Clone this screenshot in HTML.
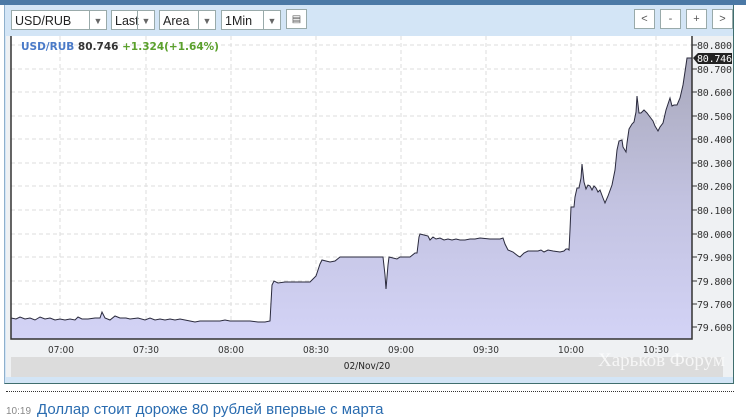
<!DOCTYPE html>
<html><head><meta charset="utf-8"><style>
body{margin:0;width:746px;height:407px;overflow:hidden;background:#fff;font-family:"Liberation Sans","DejaVu Sans",sans-serif;position:relative}
.panel{position:absolute;left:4px;top:0;width:728px;height:383px;background:#d3e5f6;border-right:1px solid #3f6e6e;border-bottom:1px solid #3f6e6e;border-left:1px solid #8fb0cc}
.top{position:absolute;left:0;top:0;width:746px;height:5px;background:#4b79a6}
.sel{position:absolute;top:10px;height:20px;background:#fff;border:1px solid #9aa;font-size:12.5px;line-height:20px;color:#222;box-sizing:border-box}
.sel span{position:absolute;right:0;top:0;width:16px;height:18px;border-left:1px solid #9aa;font-size:9px;text-align:center;color:#666}
.btn{position:absolute;top:9px;width:21px;height:20px;background:#fff;border:1px solid #9aa;font-size:11px;text-align:center;line-height:19px;color:#555;box-sizing:border-box}
.inner{position:absolute;left:6px;top:36px;width:727px;height:341px;background:#eff1f3}
.date{position:absolute;left:11px;top:357px;width:712px;height:20px;background:#dcdcdc;font-size:10px;text-align:center;line-height:20px;color:#222;font-family:"DejaVu Sans Condensed","DejaVu Sans",sans-serif}
.wm{position:absolute;left:598px;top:350px;font-family:"Liberation Serif",serif;font-size:19px;color:rgba(255,255,255,.75)}
.dot{position:absolute;left:6px;top:391px;width:728px;border-top:1px dotted #333}
.news{position:absolute;left:6px;top:401px;font-size:15px;color:#2a6cb0;white-space:nowrap}
.news b{font-weight:normal;color:#888;font-size:10px;margin-right:6px}
</style></head><body>
<div class="panel"></div>
<div class="top"></div>
<div class="sel" style="left:11px;width:96px;padding-left:3px">USD/RUB<span>▼</span></div>
<div class="sel" style="left:111px;width:44px;padding-left:3px">Last<span>▼</span></div>
<div class="sel" style="left:159px;width:57px;padding-left:3px">Area<span>▼</span></div>
<div class="sel" style="left:221px;width:60px;padding-left:3px">1Min<span>▼</span></div>
<div class="btn" style="left:286px;font-size:10px">▤</div>
<div class="btn" style="left:634px">&lt;</div>
<div class="btn" style="left:660px">-</div>
<div class="btn" style="left:686px">+</div>
<div class="btn" style="left:712px">&gt;</div>
<div class="inner"></div>
<svg style="position:absolute;left:0;top:0" width="746" height="407">
<defs><linearGradient id="g" x1="0" y1="0" x2="0" y2="1"><stop offset="0" stop-color="#a8a8bb"/><stop offset="0.5" stop-color="#c2c2e0"/><stop offset="1" stop-color="#d3d3f6"/></linearGradient></defs>
<rect x="11" y="36" width="681" height="303" fill="#fff"/>
<g stroke="#ddd" stroke-dasharray="4,3" stroke-width="1">
<line x1="11" x2="692" y1="45" y2="45"/><line x1="11" x2="692" y1="69" y2="69"/><line x1="11" x2="692" y1="92" y2="92"/><line x1="11" x2="692" y1="116" y2="116"/><line x1="11" x2="692" y1="139" y2="139"/><line x1="11" x2="692" y1="163" y2="163"/><line x1="11" x2="692" y1="186" y2="186"/><line x1="11" x2="692" y1="210" y2="210"/><line x1="11" x2="692" y1="234" y2="234"/><line x1="11" x2="692" y1="257" y2="257"/><line x1="11" x2="692" y1="281" y2="281"/><line x1="11" x2="692" y1="304" y2="304"/><line x1="11" x2="692" y1="327" y2="327"/>
<line y1="36" y2="339" x1="60" x2="60"/><line y1="36" y2="339" x1="146" x2="146"/><line y1="36" y2="339" x1="231" x2="231"/><line y1="36" y2="339" x1="316" x2="316"/><line y1="36" y2="339" x1="401" x2="401"/><line y1="36" y2="339" x1="486" x2="486"/><line y1="36" y2="339" x1="571" x2="571"/><line y1="36" y2="339" x1="656" x2="656"/>
</g>
<path d="M11,318 L16,319 20,317 25,319 30,318 35,320 40,317 45,319 50,318 55,320 60,319 65,320 70,319 75,320 78,317 82,319 88,319 95,318 100,318 102,312 105,318 110,320 115,316 120,318 126,318 130,319 138,318 145,320 150,318 155,320 160,319 165,320 170,319 175,320 180,319 190,321 195,322 200,321 210,321 220,321 225,320 230,321 240,321 250,321 258,322 265,322 270,321 272,285 274,281 278,283 285,282 290,282 298,282 305,282 310,282 313,279 316,276 320,264 322,260 326,261 330,262 335,261 340,257 350,257 365,257 375,257 383,257 385,275 386,289 388,265 389,257 393,258 397,259 400,257 405,257 410,257 415,253 417,253 419,237 420,234 424,235 428,236 430,240 433,237 436,239 440,238 444,240 448,239 452,240 456,239 460,240 465,240 470,239 475,239 480,238 490,239 500,239 503,238 505,244 508,250 513,252 518,256 520,257 524,253 528,251 533,251 538,251 541,250 544,252 548,250 553,251 560,252 564,251 566,249 568,249 569,250 570,230 571,207 574,207 575,197 577,188 579,188 581,178 582,164 584,182 586,189 588,185 590,186 592,190 594,186 596,188 598,192 600,190 603,198 605,203 608,196 612,185 615,170 617,150 619,141 622,140 623,147 626,152 627,143 629,129 632,124 634,122 636,112 637,96 639,113 641,113 644,110 647,113 650,117 653,121 655,126 658,131 660,127 663,123 666,110 670,98 672,106 674,105 677,105 680,98 683,85 686,65 687,58 692,58 L692,339 L11,339 Z" fill="url(#g)" stroke="#2a2a3d" stroke-width="1"/>
<path d="M11,36 L11,339 L692,339 L692,36" fill="none" stroke="#333" stroke-width="1.5"/>
<g font-family="DejaVu Sans Mono,Liberation Mono,monospace" font-size="10" fill="#333">
<g stroke="#333"><line x1="692" x2="697" y1="45" y2="45"/><line x1="692" x2="697" y1="69" y2="69"/><line x1="692" x2="697" y1="92" y2="92"/><line x1="692" x2="697" y1="116" y2="116"/><line x1="692" x2="697" y1="139" y2="139"/><line x1="692" x2="697" y1="163" y2="163"/><line x1="692" x2="697" y1="186" y2="186"/><line x1="692" x2="697" y1="210" y2="210"/><line x1="692" x2="697" y1="234" y2="234"/><line x1="692" x2="697" y1="257" y2="257"/><line x1="692" x2="697" y1="281" y2="281"/><line x1="692" x2="697" y1="304" y2="304"/><line x1="692" x2="697" y1="327" y2="327"/></g>
<g textLength="35" lengthAdjust="spacingAndGlyphs">
<text x="697" y="49" textLength="35">80.800</text><text x="697" y="73" textLength="35">80.700</text><text x="697" y="96" textLength="35">80.600</text><text x="697" y="120" textLength="35">80.500</text><text x="697" y="143" textLength="35">80.400</text><text x="697" y="167" textLength="35">80.300</text><text x="697" y="190" textLength="35">80.200</text><text x="697" y="214" textLength="35">80.100</text><text x="697" y="238" textLength="35">80.000</text><text x="697" y="261" textLength="35">79.900</text><text x="697" y="285" textLength="35">79.800</text><text x="697" y="308" textLength="35">79.700</text><text x="697" y="331" textLength="35">79.600</text>
</g>
<polygon points="693,58 698,53 732,53 732,64 698,64" fill="#222"/>
<text x="697" y="62" fill="#fff" textLength="35">80.746</text>
</g>
<g font-family="DejaVu Sans Condensed,DejaVu Sans,sans-serif" font-size="10" fill="#333" text-anchor="middle">
<text x="61" y="353">07:00</text><text x="146" y="353">07:30</text><text x="231" y="353">08:00</text><text x="316" y="353">08:30</text><text x="401" y="353">09:00</text><text x="486" y="353">09:30</text><text x="571" y="353">10:00</text><text x="656" y="353">10:30</text>
</g>
<text x="21" y="50" font-size="10.5" font-weight="bold" font-family="DejaVu Sans,sans-serif"><tspan fill="#4a7ac8">USD/RUB</tspan><tspan fill="#333"> 80.746</tspan><tspan fill="#5aa02c"> +1.324(+1.64%)</tspan></text>
</svg>
<div class="date">02/Nov/20</div>
<div class="wm">Харьков Форум</div>
<div class="dot"></div>
<div class="news"><b>10:19</b>Доллар стоит дороже 80 рублей впервые с марта</div>
</body></html>
